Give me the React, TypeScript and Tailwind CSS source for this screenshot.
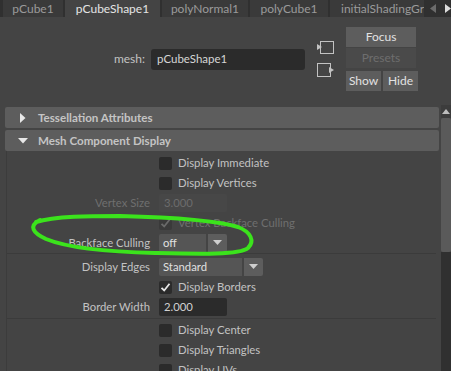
import React from 'react';

const tabs = [
  { name: 'pCube1', w: 'w-[60px]' },
  { name: 'pCubeShape1', w: 'w-[95px]', active: true },
  { name: 'polyNormal1', w: 'w-[86px]' },
  { name: 'polyCube1', w: 'w-[78px]' },
];

const Check = ({ on, disabled }: { on?: boolean; disabled?: boolean }) => (
  <div
    className={`w-[13px] h-[13px] rounded-[2px] flex items-center justify-center ${
      disabled ? 'bg-[#3a3a3a]' : 'bg-[#2b2b2b]'
    }`}
  >
    {on && (
      <svg width="11" height="11" viewBox="0 0 11 11">
        <path
          d="M1.5 5.8 L4.2 8.5 L9.5 1.8"
          fill="none"
          stroke={disabled ? '#6a6a6a' : '#e6e6e6'}
          strokeWidth="1.8"
        />
      </svg>
    )}
  </div>
);

const Row = ({ label, disabled, children }: { label?: string; disabled?: boolean; children: React.ReactNode }) => (
  <div className="h-[20px] flex items-center">
    <div className={`w-[143px] text-right ${disabled ? 'text-[#6f6f6f]' : 'text-[#c2c2c2]'}`}>{label}</div>
    <div className="ml-[9px] flex items-center">{children}</div>
  </div>
);

const CheckRow = ({ label, on, disabled }: { label: string; on?: boolean; disabled?: boolean }) => (
  <Row>
    <Check on={on} disabled={disabled} />
    <span className={`ml-[6px] ${disabled ? 'text-[#6f6f6f]' : 'text-[#c2c2c2]'}`}>{label}</span>
  </Row>
);

const Field = ({ value, disabled }: { value: string; disabled?: boolean }) => (
  <div
    className={`w-[68px] h-[18px] rounded-[2px] flex items-center pl-[5px] ${
      disabled ? 'bg-[#474747] text-[#6c6c6c]' : 'bg-[#2b2b2b] text-[#d2d2d2]'
    }`}
  >
    {value}
  </div>
);

const Dropdown = ({ value, w }: { value: string; w: string }) => (
  <div className="flex h-[18px]">
    <div className={`${w} bg-[#555555] rounded-l-[2px] flex items-center pl-[4px] text-[#e0e0e0]`}>{value}</div>
    <div className="w-[19px] ml-[2px] bg-[#5d5d5d] rounded-r-[2px] flex items-center justify-center">
      <svg width="9" height="6" viewBox="0 0 9 6">
        <path d="M0 0 H9 L4.5 5 Z" fill="#cfcfcf" />
      </svg>
    </div>
  </div>
);

const Header = ({ title, open }: { title: string; open?: boolean }) => (
  <div className="h-[21px] bg-[#5d5d5d] rounded-[2px] flex items-center">
    <div className="w-[33px] flex justify-center pl-[2px]">
      {open ? (
        <svg width="10" height="6" viewBox="0 0 10 6">
          <path d="M0 0 H10 L5 5.5 Z" fill="#e8e8e8" />
        </svg>
      ) : (
        <svg width="6" height="10" viewBox="0 0 6 10">
          <path d="M0 0 V10 L5.5 5 Z" fill="#e8e8e8" />
        </svg>
      )}
    </div>
    <span className="font-bold text-[11.6px] text-[#c4c4c4]">{title}</span>
  </div>
);

const Btn = ({ label, w, dim }: { label: string; w: string; dim?: boolean }) => (
  <div
    className={`${w} h-[20px] flex items-center justify-center ${
      dim ? 'bg-[#4a4a4a] text-[#6e6e6e]' : 'bg-[#5d5d5d] text-[#e2e2e2]'
    }`}
  >
    {label}
  </div>
);

export default function App() {
  return (
    <div className="relative w-[451px] h-[371px] overflow-hidden bg-[#444444] text-[11.3px] font-['Lato','Noto_Sans',sans-serif] select-none">
      {/* tabs */}
      <div className="flex h-[17px] bg-[#303030] pl-[3px] gap-[2px] text-[12px]">
        {tabs.map((t) => (
          <div
            key={t.name}
            className={`${t.w} flex items-center justify-center ${
              t.active ? 'bg-[#444444] text-[#e4e4e4]' : 'bg-[#3a3a3a] text-[#9a9a9a]'
            }`}
          >
            {t.name}
          </div>
        ))}
        <div className="w-[94px] bg-[#3a3a3a] text-[#9a9a9a] flex items-center pl-[11px] overflow-hidden whitespace-nowrap">
          initialShadingGr
        </div>
        <div className="flex items-center gap-[9px] pl-[4px]">
          <svg width="6" height="9" viewBox="0 0 6 9">
            <path d="M6 0 V9 L0 4.5 Z" fill="#6c6c6c" />
          </svg>
          <svg width="6" height="9" viewBox="0 0 6 9">
            <path d="M0 0 V9 L6 4.5 Z" fill="#dcdcdc" />
          </svg>
        </div>
      </div>

      {/* node row */}
      <div className="flex items-center pt-[10px]">
        <div className="w-[145px] text-right text-[#c2c2c2] text-[12px]">mesh:</div>
        <div className="ml-[6px] w-[154px] h-[21px] bg-[#2b2b2b] rounded-[3px] flex items-center pl-[6px] text-[11.5px] text-[#d6d6d6]">
          pCubeShape1
        </div>
        <div className="ml-[12px] flex flex-col gap-[9px]">
          <svg width="18" height="13" viewBox="0 0 18 13">
            <rect x="3.5" y="0.5" width="13" height="12" fill="none" stroke="#c2c2c2" />
            <path d="M0 3 L5 6 L0 9 Z" fill="#c2c2c2" />
          </svg>
          <svg width="18" height="14" viewBox="0 0 18 14">
            <rect x="0.5" y="0.5" width="13" height="13" fill="none" stroke="#c2c2c2" />
            <path d="M12 4 L17 7 L12 10 Z" fill="#c2c2c2" />
          </svg>
        </div>
        <div className="ml-[11px] flex flex-col text-[12px]">
          <Btn label="Focus" w="w-[70px]" />
          <div className="h-[1px]" />
          <Btn label="Presets" w="w-[70px]" dim />
          <div className="flex gap-[2px] mt-[3px]">
            <Btn label="Show" w="w-[35px]" />
            <Btn label="Hide" w="w-[35px]" />
          </div>
        </div>
      </div>

      {/* attribute area */}
      <div className="flex mt-[14px]">
        <div className="w-[434px] ml-[5px] flex flex-col pt-[2px]">
          <Header title="Tessellation Attributes" />
          <div className="h-[2px]" />
          <Header title="Mesh Component Display" open />
          <div className="ml-[1px] mr-[3px] border-l border-[#3c3c3c]">
            <div className="pt-[2px] border-b border-[#3b3b3b]">
              <CheckRow label="Display Immediate" />
              <CheckRow label="Display Vertices" />
              <Row label="Vertex Size" disabled>
                <Field value="3.000" disabled />
              </Row>
              <CheckRow label="Vertex Backface Culling" on disabled />
              <Row label="Backface Culling">
                <Dropdown value="off" w="w-[47px]" />
              </Row>
            </div>
            <div className="pt-[3px] pb-[1px] border-b border-[#3b3b3b]">
              <Row label="Display Edges">
                <Dropdown value="Standard" w="w-[83px]" />
              </Row>
              <CheckRow label="Display Borders" on />
              <Row label="Border Width">
                <Field value="2.000" />
              </Row>
            </div>
            <div className="pt-[1px]">
              <CheckRow label="Display Center" />
              <CheckRow label="Display Triangles" />
              <CheckRow label="Display UVs" />
            </div>
          </div>
        </div>
        {/* scrollbar */}
        <div className="ml-[2px] w-[10px] flex flex-col">
          <div className="h-[13px] bg-[#3c3c3c] flex items-center justify-center">
            <svg width="8" height="5" viewBox="0 0 8 5">
              <path d="M0 5 H8 L4 0 Z" fill="#bdbdbd" />
            </svg>
          </div>
          <div className="h-[134px] bg-[#5a5a5a] rounded-[2px]" />
          <div className="flex-1 h-[200px] bg-[#303030]" />
        </div>
      </div>

      {/* hand-drawn annotation */}
      <svg className="absolute left-0 top-0 pointer-events-none" width="451" height="371" viewBox="0 0 451 371">
        <path
          d="M36 222 C 55 216, 90 216, 120 216 C 160 217, 215 220, 238 227 C 251 232, 255 241, 248 248 C 240 255, 200 254, 155 253 C 110 252, 68 248, 46 239 C 33 233, 28 226, 40 220"
          fill="none"
          stroke="#3be31c"
          strokeWidth="4"
          strokeLinecap="round"
        />
      </svg>
    </div>
  );
}
